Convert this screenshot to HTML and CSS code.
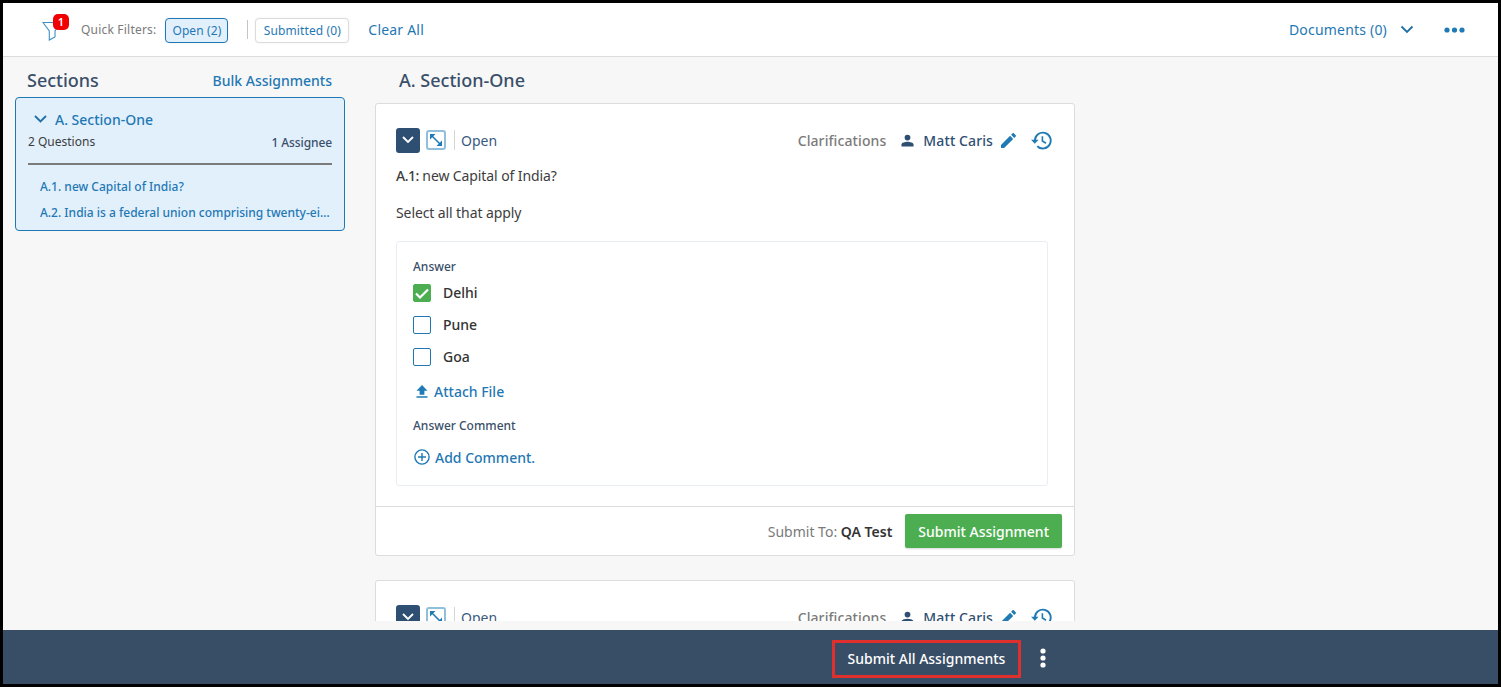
FILE: index.html
```html
<!DOCTYPE html>
<html lang="en">
<head>
<meta charset="utf-8">
<title>Assignments</title>
<link rel="stylesheet" href="styles.css">
</head>
<body>
<div class="frame">
  <header class="toolbar">
    <div class="filter-icon">
      <svg width="20" height="22" viewBox="0 0 20 22"><path d="M1 2.5H19L13 11V17L7.3 20V11Z" fill="none" stroke="#3f8fc4" stroke-width="1.1"/></svg>
      <span class="badge">1</span>
    </div>
    <span class="qf-label">Quick Filters:</span>
    <button class="chip chip-on">Open (2)</button>
    <span class="vsep"></span>
    <button class="chip">Submitted (0)</button>
    <a class="clear">Clear All</a>
    <div class="spacer"></div>
    <a class="docs">Documents (0)</a>
    <svg class="docs-chev" width="14" height="9" viewBox="0 0 14 9"><path d="M1.5 1.5L7 7L12.5 1.5" fill="none" stroke="#1f6fa8" stroke-width="1.8"/></svg>
    <svg class="more" width="21" height="6" viewBox="0 0 21 6"><circle cx="3" cy="3" r="2.6" fill="#1f7ab5"/><circle cx="10.5" cy="3" r="2.6" fill="#1f7ab5"/><circle cx="18" cy="3" r="2.6" fill="#1f7ab5"/></svg>
  </header>

  <div class="content">
    <aside class="sidebar">
      <div class="side-head">
        <h2 class="side-title">Sections</h2>
        <a class="bulk">Bulk Assignments</a>
      </div>
      <div class="side-card">
        <div class="sc-title">
          <svg width="13" height="8" viewBox="0 0 13 8"><path d="M1 1L6.5 6.5L12 1" fill="none" stroke="#1f6fa8" stroke-width="1.8"/></svg>
          <span>A. Section-One</span>
        </div>
        <div class="sc-meta"><span>2 Questions</span><span class="sc-assignee">1 Assignee</span></div>
        <div class="sc-rule"></div>
        <a class="sc-q">A.1. new Capital of India?</a>
        <a class="sc-q">A.2. India is a federal union comprising twenty-eight states and eight union territories</a>
      </div>
    </aside>

    <main class="main">
      <h2 class="main-title">A. Section-One</h2>

      <section class="card">
        <div class="card-body">
          <div class="q-head">
            <span class="collapse-btn"><svg width="12" height="8" viewBox="0 0 12 8"><path d="M1 1L6 6L11 1" fill="none" stroke="#fff" stroke-width="1.8"/></svg></span>
            <span class="expand-btn"><svg width="14" height="14" viewBox="0 0 14 14"><path d="M3 3L11 11" fill="none" stroke="#1f7ab5" stroke-width="1.6"/><path d="M1 1H6.5L1 6.5ZM13 13H7.5L13 7.5Z" fill="#1f7ab5"/></svg></span>
            <span class="q-sep"></span>
            <span class="q-status">Open</span>
            <div class="spacer"></div>
            <span class="clar">Clarifications</span>
            <svg class="person" width="13" height="13" viewBox="0 0 14 13"><circle cx="7" cy="3.4" r="3.1" fill="#2f4f72"/><path d="M0.5 13V10.8C0.5 8.8 4.5 7.8 7 7.8S13.5 8.8 13.5 10.8V13Z" fill="#2f4f72"/></svg>
            <span class="assignee">Matt Caris</span>
            <svg class="pencil" width="15" height="15" viewBox="0 0 15 15"><path d="M0 11.9V15H3.1L12.2 5.9L9.1 2.8ZM14.7 3.4C15.1 3 15.1 2.5 14.7 2.2L12.8 .3C12.5 -.1 12 -.1 11.6 .3L10.1 1.8L13.2 4.9Z" fill="#1f7ab5"/></svg>
            <svg class="history" width="21" height="19" viewBox="0 0 21 19"><path d="M3.9 9.5A7.9 7.9 0 1 1 6.3 15.2" fill="none" stroke="#1f7ab5" stroke-width="1.9"/><path d="M0 8.7H7.6L3.8 12.7Z" fill="#1f7ab5"/><path d="M11.4 5.2V10L15 12.2" fill="none" stroke="#1f7ab5" stroke-width="1.6"/></svg>
          </div>
          <p class="q-text"><strong>A.1:</strong> new Capital of India?</p>
          <p class="q-hint">Select all that apply</p>
          <div class="answer">
            <div class="a-label">Answer</div>
            <label class="opt"><span class="box box-on"><svg width="14" height="11" viewBox="0 0 14 11"><path d="M1 5.5L5 9.5L13 1.5" fill="none" stroke="#fff" stroke-width="2.2"/></svg></span><span class="opt-text">Delhi</span></label>
            <label class="opt"><span class="box"></span><span class="opt-text">Pune</span></label>
            <label class="opt"><span class="box"></span><span class="opt-text">Goa</span></label>
            <a class="attach"><svg width="12" height="13" viewBox="0 0 12 13"><path d="M6 0L11.5 5.8H8.4V9.8H3.6V5.8H.5ZM.5 11.2H11.5V12.8H.5Z" fill="#1f7ab5"/></svg>Attach File</a>
            <div class="a-label a-label-comment">Answer Comment</div>
            <a class="add"><svg width="16" height="16" viewBox="0 0 16 16"><circle cx="8" cy="8" r="7.1" fill="none" stroke="#1f7ab5" stroke-width="1.4"/><path d="M8 4V12M4 8H12" stroke="#1f7ab5" stroke-width="1.4"/></svg>Add Comment.</a>
          </div>
        </div>
        <div class="card-foot">
          <span class="submit-to">Submit To: <b>QA Test</b></span>
          <button class="submit">Submit Assignment</button>
        </div>
      </section>

      <section class="card">
        <div class="card-body">
          <div class="q-head">
            <span class="collapse-btn"><svg width="12" height="8" viewBox="0 0 12 8"><path d="M1 1L6 6L11 1" fill="none" stroke="#fff" stroke-width="1.8"/></svg></span>
            <span class="expand-btn"><svg width="14" height="14" viewBox="0 0 14 14"><path d="M3 3L11 11" fill="none" stroke="#1f7ab5" stroke-width="1.6"/><path d="M1 1H6.5L1 6.5ZM13 13H7.5L13 7.5Z" fill="#1f7ab5"/></svg></span>
            <span class="q-sep"></span>
            <span class="q-status">Open</span>
            <div class="spacer"></div>
            <span class="clar">Clarifications</span>
            <svg class="person" width="13" height="13" viewBox="0 0 14 13"><circle cx="7" cy="3.4" r="3.1" fill="#2f4f72"/><path d="M0.5 13V10.8C0.5 8.8 4.5 7.8 7 7.8S13.5 8.8 13.5 10.8V13Z" fill="#2f4f72"/></svg>
            <span class="assignee">Matt Caris</span>
            <svg class="pencil" width="15" height="15" viewBox="0 0 15 15"><path d="M0 11.9V15H3.1L12.2 5.9L9.1 2.8ZM14.7 3.4C15.1 3 15.1 2.5 14.7 2.2L12.8 .3C12.5 -.1 12 -.1 11.6 .3L10.1 1.8L13.2 4.9Z" fill="#1f7ab5"/></svg>
            <svg class="history" width="21" height="19" viewBox="0 0 21 19"><path d="M3.9 9.5A7.9 7.9 0 1 1 6.3 15.2" fill="none" stroke="#1f7ab5" stroke-width="1.9"/><path d="M0 8.7H7.6L3.8 12.7Z" fill="#1f7ab5"/><path d="M11.4 5.2V10L15 12.2" fill="none" stroke="#1f7ab5" stroke-width="1.6"/></svg>
          </div>
        </div>
      </section>
    </main>
  </div>

  <footer class="footer">
    <button class="submit-all">Submit All Assignments</button>
    <svg class="kebab" width="6" height="20" viewBox="0 0 6 20"><circle cx="3" cy="3" r="2.6" fill="#fff"/><circle cx="3" cy="10" r="2.6" fill="#fff"/><circle cx="3" cy="17" r="2.6" fill="#fff"/></svg>
  </footer>
</div>
</body>
</html>
```
FILE: styles.css
```css
* { box-sizing: border-box; }
html, body { margin: 0; height: 100%; overflow: hidden; }
body {
  background: #000;
  padding: 3px;
  font-family: "Noto Sans", "Open Sans", sans-serif;
  color: #333;
}
a { cursor: pointer; }
p, h2 { margin: 0; }
button { font-family: inherit; cursor: pointer; }
.frame { height: 100%; display: flex; flex-direction: column; background: #f7f7f7; }
.spacer { flex: 1; }

.toolbar {
  height: 54px; flex: none; display: flex; align-items: center;
  background: #fff; border-bottom: 1px solid #dcdcdc;
  padding: 0 0 0 39px;
}
.filter-icon { position: relative; width: 25px; height: 24px; margin-right: 14px; margin-top: 3px; }
.filter-icon svg { display: block; margin-top: 1px; }
.badge {
  position: absolute; left: 11px; top: -5px; width: 16px; height: 16px;
  background: #f00000; color: #fff; border-radius: 5px;
  font-size: 11px; font-weight: 600; line-height: 16px; text-align: center;
}
.qf-label { font-size: 12px; color: #7a7a7a; margin-right: 9px; letter-spacing: .2px; }
.chip {
  height: 25px; margin-top: 2px; padding: 0 7.5px; border-radius: 4px; font-size: 12px; letter-spacing: .1px;
  color: #1f78b4; background: #fff; border: 1px solid #dcdcdc;
  box-shadow: 0 0 2px rgba(0,0,0,.08);
}
.chip-on { background: #e2f0fc; border-color: #1f78b4; padding: 0 6px; }
.vsep { width: 1px; height: 19px; background: #c4c4c4; margin: 0 7px 0 19px; }
.clear { font-size: 14px; color: #1f78b4; margin-left: 19px; letter-spacing: .2px; }
.docs { font-size: 14px; color: #1f78b4; letter-spacing: .2px; }
.docs-chev { margin: 0 0 0 13px; }
.more { margin: 0 33px 0 30px; }

.content { flex: 1; min-height: 0; display: flex; overflow: hidden; margin-bottom: 9px; }
.sidebar { width: 342px; flex: none; padding: 0 0 0 12px; }
.side-head { display: flex; justify-content: space-between; align-items: center; height: 40px; padding: 6px 13px 0 12px; }
.side-title { font-size: 18px; font-weight: 500; color: #3a4f69; }
.bulk { font-size: 14px; font-weight: 500; color: #1f78b4; }
.side-card {
  width: 330px; height: 134px; background: #e2f0fc; border: 1px solid #1f78b4; border-radius: 4px;
  padding: 11px 12px 0 12px;
}
.sc-title { display: flex; align-items: center; gap: 8px; padding-left: 6px; font-size: 14px; color: #1f78b4; height: 20px; }
.sc-title span { font-weight: 500; }
.sc-meta { display: flex; justify-content: space-between; font-size: 12px; color: #3d3d3d; margin-top: 4px; }
.sc-assignee { font-weight: 500; color: #3a4f69; position: relative; top: 1px; letter-spacing: -.1px; }
.sc-rule { height: 2px; background: #7b7b7b; margin-top: 13px; margin-bottom: 13px; }
.sc-q {
  display: block; padding-left: 12px; font-size: 12px; color: #1f78b4; font-weight: 500;
  line-height: 17px; margin-bottom: 9px;
  white-space: nowrap; overflow: hidden; text-overflow: ellipsis;
}

.main { width: 700px; margin-left: 30px; flex: none; }
.main-title { font-size: 18px; font-weight: 500; color: #3a4f69; height: 46px; padding: 11px 0 0 24px; }
.card { background: #fff; border: 1px solid #dcdcdc; border-radius: 3px; margin-bottom: 24px; }
.card-body { padding: 23px 22px 20px 20px; }
.q-head { display: flex; align-items: center; height: 26px; }
.collapse-btn {
  width: 24px; height: 25px; background: #2f4f72; border-radius: 3px;
  display: flex; align-items: center; justify-content: center;
}
.expand-btn {
  width: 20px; height: 20px; margin-left: 6px; border: 2px solid #8fbfdc; border-radius: 3px;
  display: flex; align-items: center; justify-content: center;
}
.q-sep { width: 1px; height: 20px; background: #d6d6d6; margin: 0 6px 0 8px; }
.q-status { font-size: 14px; color: #3a5a7e; }
.clar { font-size: 14px; color: #7a7a7a; font-weight: 500; letter-spacing: .1px; }
.person { margin-left: 15px; }
.assignee { font-size: 14px; font-weight: 500; color: #2f4f72; margin-left: 9px; letter-spacing: .1px; }
.pencil { margin-left: 8px; }
.history { margin-left: 15px; }
.q-text { font-size: 14px; line-height: 20px; margin-top: 13px; color: #3d3d3d; letter-spacing: -.1px; }
.q-text strong { font-weight: 500; letter-spacing: -.5px; }
.q-hint { font-size: 14px; line-height: 20px; margin-top: 17px; color: #3d3d3d; letter-spacing: -.1px; }
.answer {
  margin: 18px 4px 0 0; height: 245px; border: 1px solid #e8eef4; border-radius: 3px;
  padding: 16px 16px 0 16px;
}
.a-label { font-size: 12px; font-weight: 500; color: #3a4f69; line-height: 17px; }
.opt { display: flex; align-items: center; height: 32px; font-size: 14px; font-weight: 500; color: #333; }
.opt:first-of-type { margin-top: 2px; }
.opt-text { margin-top: -2px; }
.box {
  width: 18px; height: 18px; margin-right: 12px; background: #fff;
  border: 1px solid #1f78b4; border-radius: 2px;
  display: flex; align-items: center; justify-content: center;
}
.box-on { background: #4cae50; border-color: #4cae50; }
.attach { display: flex; align-items: center; gap: 6px; font-size: 14px; font-weight: 500; color: #1f78b4; margin: 8px 0 0 3px; height: 20px; }
.a-label-comment { margin-top: 16px; }
.add { display: flex; align-items: center; gap: 5px; font-size: 14px; font-weight: 500; color: #1f78b4; margin: 13px 0 0 1px; height: 20px; }
.card-foot {
  height: 49px; border-top: 1px solid #dcdcdc; display: flex; align-items: center; justify-content: flex-end;
  padding-right: 12px; gap: 13px;
}
.submit-to { font-size: 14px; color: #7a7a7a; }
.submit-to b { font-weight: 600; color: #333; }
.submit { height: 34px; padding: 0 13px; border: 0; border-radius: 2px; background: #4cae50; color: #fff; font-size: 14px; font-weight: 500; box-shadow: 0 1px 2px rgba(0,0,0,.15); }

.footer {
  height: 54px; flex: none; background: #384d66; display: flex; align-items: center;
  padding-left: 829px;
}
.submit-all {
  width: 189px; height: 38px; margin-top: 3px; background: transparent; color: #fff; font-size: 14px; font-weight: 500;
  border: 3px solid #e0302d; padding: 0;
}
.kebab { margin-left: 19px; margin-top: 2px; }
```
